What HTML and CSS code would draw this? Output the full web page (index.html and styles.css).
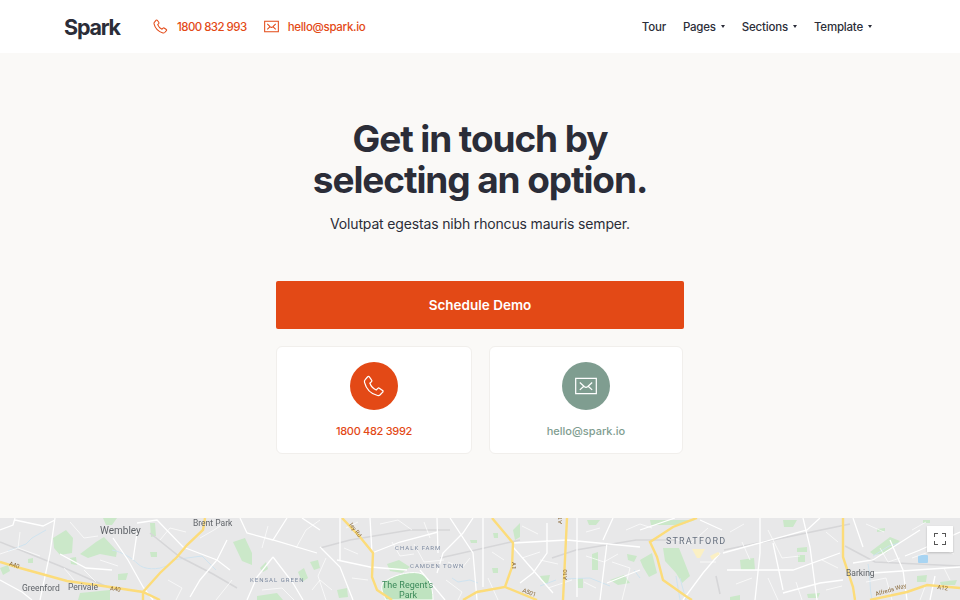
FILE: index.html
```html
<!DOCTYPE html>
<html lang="en">
<head>
<meta charset="UTF-8">
<meta name="viewport" content="width=device-width, initial-scale=1.0">
<title>Spark - Contact</title>
<link rel="stylesheet" href="styles.css">
</head>
<body>
  <header class="topbar">
    <a class="logo" href="#">Spark</a>
    <a class="toplink tel" href="#">
      <svg class="topicon" viewBox="0 0 16 16"><path d="M1.600 3.400 3.400 1.300c.4-.4.9-.4 1.200 0l1.700 2.400c.3.4.2.8-.1 1.100L5 6c.7 1.900 2.600 4 4.600 4.900l1.200-1.200c.3-.3.8-.4 1.100-.1l2.300 1.600c.5.3.5.9.1 1.300l-1.800 1.900c-.5.5-1.200.7-1.900.5C5.900 13.700 2.300 10 1.100 5.300c-.2-.7 0-1.400.5-1.900z"/></svg>
      1800 832 993
    </a>
    <a class="toplink" href="#">
      <svg class="topicon" viewBox="0 0 16 16"><path d="M.7 2.500h14.600v11H.7zM3.500 5.200l3.200 3.200c.8.700 1.800.7 2.600 0l3.200-3.200M3.500 11l2.700-2.500M12.500 11 9.800 8.500"/></svg>
      hello@spark.io
    </a>
    <nav class="nav">
      <a href="#">Tour</a>
      <a class="drop" href="#">Pages</a>
      <a class="drop" href="#">Sections</a>
      <a class="drop" href="#">Template</a>
    </nav>
  </header>

  <main class="hero">
    <h1>Get in touch by<br>selecting an option.</h1>
    <p class="lead">Volutpat egestas nibh rhoncus mauris semper.</p>
    <a class="btn" href="#">Schedule Demo</a>
    <div class="cards">
      <a class="card orange" href="#">
        <span class="circle">
          <svg viewBox="0 0 16 16"><path d="M1.600 3.400 3.400 1.300c.4-.4.9-.4 1.200 0l1.700 2.400c.3.4.2.8-.1 1.100L5 6c.7 1.900 2.600 4 4.600 4.900l1.200-1.200c.3-.3.8-.4 1.100-.1l2.300 1.600c.5.3.5.9.1 1.300l-1.800 1.900c-.5.5-1.200.7-1.900.5C5.900 13.700 2.300 10 1.100 5.300c-.2-.7 0-1.400.5-1.900z"/></svg>
        </span>
        1800 482 3992
      </a>
      <a class="card sage" href="#">
        <span class="circle">
          <svg viewBox="0 0 16 16"><path d="M.5 2.500h15v11H.5zM3.500 5.400l3.200 3c.8.700 1.800.7 2.600 0l3.200-3M3.500 10.800l2.700-2.400M12.500 10.800 9.800 8.400"/></svg>
        </span>
        hello@spark.io
      </a>
    </div>
  </main>

  <section class="map">
    <svg class="mapart" viewBox="0 0 960 82">
      <!-- parks -->
      <g class="park">
        <path d="M53 20 66 12 73 20 72 35 60 37 54 30zM80 36 96 24 104 19 117 33 116 39 100 36 88 40z"/>
        <path d="M150 5h5l1 13-5 1zM150 34h7v5h-6zM118 56l10-1-2 7h-8zM80 75l30-3v10H78zM103 0h14l-5 7h-6z"/>
        <path d="M233 24l12-4 7 15v12l-10-4zM260 50l6-6 2 7-5 3zM298 54l6-4 4 10-6 4zM310 44l8-2 2 8-6 2zM257 78l20-3 6 7h-26z"/>
        <path d="M0 50l8-3 2 6-7 4zM28 41l5-1v5h-5zM70 40l6-1 1 8-6-1z"/>
        <path d="M387 46l12-4 11 7-8 6-12-2zM337 72l10-2 1 9-9 1zM513 12l7-7v14l-5 3zM493 15h5v5h-4zM470 22h7v3h-6zM492 50h6v5h-5z"/>
        <path d="M592 36l6-2v18h-6zM540 58l10-1-2 8h-5zM577 60h6v10h-5zM610 62l14-5 6 8-12 2zM627 36l10 2-3 6-6-2zM587 2h13l-4 5h-7z"/>
        <path d="M650 2h45l-14 5h-30zM640 42l12-7 5 20-8 4-6-10z"/>
        <path d="M663 30h16l11 28-8 7-6-10-11-12zM740 42l14-2 1 12h-14zM783 2h14l-4 7h-9zM797 30l10-1v5h-10zM798 37h7v7h-7zM807 76l13-1-2 5h-10zM730 79l10-2v5h-10z"/>
        <path d="M870 34l20-15 10 4-14 12-12 2zM877 11l8-1v3l-8 1zM917 58l10-1-1 7h-9zM923 2h7v3h-7zM940 64l17-2-2 5h-14z"/>
      </g>
      <path class="regent" d="M383 65c8-7 24-12 36-10 9 2 14 12 14 27h-47c-3-6-6-12-3-17z"/>
      <!-- water -->
      <g class="water">
        <path d="M8 33 26 26 32 20 46 12M112 32c10 2 20 8 26 14s20 6 28 2M172 42l30-4 14 14M452 60l6 4 12-2 8 3"/>
        <path d="M540 68l16-6M562 61l28-1 20 8M634 52l6 8M676 58l4 24M680 60l6 22"/>
        <path d="M868 46c3 12 1 24 4 36M873 38l16-10 10-3"/>
      </g>
      <rect class="pond" x="918" y="37" width="10" height="8" rx="1"/>
      <!-- grey rail lines -->
      <g class="rail">
        <path d="M150 15l30 24 33 17 24 14M0 24l60 24 50 22M320 30l30-8 60-10 40 0M440 40 520 22M552 40l24-8 60-10 40 0M724 32 850 6"/>
        <path d="M845 28l30 16 85 4M716 58l4 18"/>
      </g>
      <!-- small side streets -->
      <g class="minor">
        <path d="M0 36 18 30 40 38M18 30 20 14M70 4 84 20 98 18M64 50 74 62M100 42 118 48M84 52 96 64M160 22 170 10 186 14M168 62 182 70 176 82"/>
        <path d="M200 20 214 12 226 4M232 62 216 82M262 30 268 8M296 30 306 12 320 2M262 72 282 70 294 82M312 72 320 62 332 72M326 40 318 58 326 82"/>
        <path d="M346 10 358 4M344 30 358 36M352 60 368 62M380 6 398 2 412 12M392 24 400 38 414 36M414 26 424 44 444 42M424 4 430 20M448 44 462 50 470 40M446 62 462 74 458 82"/>
        <path d="M492 34 504 42M488 60 498 82M522 8 538 16M522 40 540 34M540 42 558 46M548 70 572 62M586 14 600 10M586 38 604 44 618 36M584 64 596 70M612 44 630 50 622 82M626 12 640 6 652 10"/>
        <path d="M672 20 690 26 708 10M700 44 716 44M730 14 744 6M736 66 752 60M742 24 750 42M768 12 782 40 800 38M768 60 778 82M796 64 802 82M826 14 838 24M822 42 838 50M826 72 842 68"/>
        <path d="M866 6 884 14M866 64 886 60 892 82M880 30 888 44 900 40M912 12 926 4M912 40 940 30 954 36M926 66 920 82M944 50 950 62"/>
      </g>
      <!-- white streets -->
      <g class="street">
        <path d="M0 12 13 7 15 0M15 2 43 8 55 2M55 0 50 35 40 82M113 20 128 42 143 69 153 82M137 15 133 42M137 5 157 2 183 29 217 42 230 52"/>
        <path d="M227 22 217 42 200 62 190 79M240 0 247 15 273 22 317 35M273 39 257 59 247 82M273 39 293 65 303 82M287 0 273 22M302 0 320 12M0 62 22 74 32 82M60 36l26 14 26 2"/>
        <path d="M320 29 340 49 353 82M340 0V42M370 0 372 35M437 0 438 35M450 0 473 35 477 82M483 0V69M473 0 463 15 443 35 437 55M337 42 370 49 407 52"/>
        <path d="M513 25 567 22 640 29M513 29 533 52 553 75M547 5V35L533 55 520 65M577 0V79M607 25 600 82M613 0 603 22M640 52 607 65M372 35 400 24 438 14M420 52 445 82"/>
        <path d="M723 35 807 12 820 0M720 35 703 55 683 82M760 0V35L755 82M773 25 783 72M727 52H793L840 35M803 0 810 29 817 82M853 0 863 29M920 12 873 42 853 45M890 22 903 52 907 82"/>
        <path d="M873 55 960 49M783 75 820 65 843 62M640 12 675 0M700 2 722 12M960 14 920 32 905 38M930 82 935 58"/>
      </g>
      <!-- yellow roads -->
      <g class="road">
        <path d="M0 44 20 50 67 63 110 69 143 74 160 82M143 82V74L160 55 177 39 187 27 203 12 205 0"/>
        <path d="M342 0 360 19 373 35 372 59 377 72 392 82M492 0 513 25 512 49 505 69 477 74 463 82M505 69 537 82M567 0 563 82"/>
        <path d="M697 0 673 9 650 24 657 39 663 62 687 79 692 82M843 0V39L853 69 855 82M870 82 907 74 927 67 960 70"/>
      </g>
      <g class="town">
        <path d="M692 31h13l-5 9h-3zM710 38l8-4 2 2-8 6z"/>
      </g>
      <!-- labels -->
      <text class="lab big" x="100" y="16">Wembley</text>
      <text class="lab" x="193" y="8">Brent Park</text>
      <text class="lab" x="22" y="73">Greenford</text>
      <text class="lab" x="68" y="72">Perivale</text>
      <text class="lab" x="846" y="58">Barking</text>
      <text class="rd" x="9" y="49" transform="rotate(18 14 47)">A40</text>
      <text class="rd" x="110" y="73" transform="rotate(8 115 71)">A40</text>
      <text class="rd" x="349" y="7" transform="rotate(52 349 7)">ley Rd</text>
      <text class="rd" x="512" y="44" transform="rotate(90 512 44)">A1</text>
      <text class="rd" x="566" y="2" transform="rotate(-90 566 6)">A1</text>
      <text class="rd" x="561" y="60" transform="rotate(-90 565 58)">A10</text>
      <text class="rd" x="522" y="74" transform="rotate(20 522 74)">A501</text>
      <text class="rd" x="876" y="78" transform="rotate(-16 876 78)">Alfreds Way</text>
      <text class="rd" x="937" y="71" transform="rotate(8 937 71)">A12</text>
      <text class="dist" x="250" y="64">KENSAL GREEN</text>
      <text class="dist" x="395" y="32">CHALK FARM</text>
      <text class="dist" x="410" y="50">CAMDEN TOWN</text>
      <text class="dist large" x="666" y="26">STRATFORD</text>
      <text class="green" x="382" y="70">The Regent's</text>
      <text class="green" x="399" y="80">Park</text>
    </svg>
    <button class="fullscreen" aria-label="Fullscreen">
      <svg viewBox="0 0 12 12"><path d="M0 4V0h4M8 0h4v4M12 8v4H8M4 12H0V8"/></svg>
    </button>
  </section>
</body>
</html>
```

FILE: styles.css
```css
* {
  box-sizing: border-box;
}
body {
  margin: 0;
  font-family: "Inter", "Liberation Sans", sans-serif;
  color: #2b2d38;
  background-color: #faf9f7;
}
a {
  color: inherit;
  text-decoration: none;
}

.topbar {
  height: 53px;
  padding: 0 88px 0 64px;
  display: flex;
  align-items: center;
  background-color: #fff;
}
.logo {
  width: 89px;
  font-size: 21.5px;
  font-weight: 700;
  letter-spacing: -1.2px;
}
.toplink {
  margin-right: 17px;
  display: flex;
  align-items: center;
  gap: 9px;
  font-size: 11.5px;
  font-weight: 500;
  letter-spacing: -0.3px;
  color: #e34916;
}
.tel {
  letter-spacing: -0.55px;
}
.topicon {
  width: 15px;
  height: 15px;
  fill: none;
  stroke: #e34916;
  stroke-width: 1.1;
}
.nav {
  margin-left: auto;
  display: flex;
  gap: 17px;
  font-size: 11.5px;
  font-weight: 500;
  letter-spacing: -0.2px;
}
.drop::after {
  content: "";
  display: inline-block;
  margin-left: 5px;
  vertical-align: 3px;
  border-left: 2.5px solid transparent;
  border-right: 2.5px solid transparent;
  border-top: 3px solid #2b2d38;
}

.hero {
  height: 465px;
  padding-top: 65px;
  display: flex;
  flex-direction: column;
  align-items: center;
  text-align: center;
}
h1 {
  margin: 0;
  font-size: 37px;
  line-height: 41px;
  font-weight: 700;
  letter-spacing: -1.1px;
}
.lead {
  margin: 12px 0 0;
  font-size: 14px;
  line-height: 24px;
  letter-spacing: -0.16px;
}
.btn {
  width: 408px;
  height: 48px;
  margin-top: 45px;
  display: flex;
  align-items: center;
  justify-content: center;
  border-radius: 2px;
  background-color: #e34916;
  color: #fff;
  font-size: 13.5px;
  font-weight: 600;
}
.cards {
  width: 408px;
  margin-top: 17px;
  display: grid;
  grid-template-columns: 196px 194px;
  gap: 17px;
}
.card {
  height: 108px;
  padding-top: 15px;
  display: flex;
  flex-direction: column;
  align-items: center;
  gap: 14px;
  border: 1px solid #f1efec;
  border-radius: 6px;
  background-color: #fff;
  font-size: 11px;
  font-weight: 500;
}
.circle {
  width: 48px;
  height: 48px;
  display: flex;
  align-items: center;
  justify-content: center;
  border-radius: 50%;
}
.circle svg {
  width: 22px;
  height: 22px;
  fill: none;
  stroke: #fff;
  stroke-width: 0.9;
}
.orange {
  color: #e34916;
  letter-spacing: -0.3px;
}
.orange .circle {
  background-color: #e34916;
}
.sage {
  color: #7f9d90;
}
.sage .circle {
  background-color: #7f9d90;
}

.map {
  position: relative;
  height: 82px;
  overflow: hidden;
  background-color: #e8e8e9;
}
.mapart {
  display: block;
  width: 960px;
  height: 82px;
  font-family: "Roboto", "Liberation Sans", sans-serif;
  filter: blur(0.3px);
}
.park path {
  fill: #cbe8c9;
}
.regent {
  fill: #bfe3c0;
  stroke: #fff;
  stroke-width: 1;
}
.water path {
  fill: none;
  stroke: #cfe3ef;
  stroke-width: 1;
}
.pond {
  fill: #a8d4f2;
}
.rail path {
  fill: none;
  stroke: #d6d6d8;
  stroke-width: 1.6;
}
.minor path {
  fill: none;
  stroke: #fff;
  stroke-width: 0.8;
  opacity: 0.85;
}
.street path {
  fill: none;
  stroke: #fff;
  stroke-width: 1.3;
}
.road path {
  fill: none;
  stroke: #fcdc7a;
  stroke-width: 2.4;
}
.town path {
  fill: #fbf0c4;
}
.lab {
  font-size: 8.5px;
  fill: #5f6368;
}
.big {
  font-size: 10px;
}
.rd {
  font-size: 6px;
  fill: #8a6a3a;
}
.dist {
  font-size: 6px;
  letter-spacing: 1px;
  fill: #7d8aa0;
}
.large {
  font-size: 9px;
  letter-spacing: 1.2px;
  fill: #66707f;
}
.green {
  font-size: 9px;
  fill: #3c8a5a;
}
.fullscreen {
  position: absolute;
  top: 8px;
  right: 7px;
  width: 26px;
  height: 26px;
  padding: 0;
  display: flex;
  align-items: center;
  justify-content: center;
  border: 0;
  background-color: #fff;
  box-shadow: 0 1px 2px rgba(0, 0, 0, 0.2);
}
.fullscreen svg {
  width: 12px;
  height: 12px;
  fill: none;
  stroke: #555;
  stroke-width: 2;
}
```
